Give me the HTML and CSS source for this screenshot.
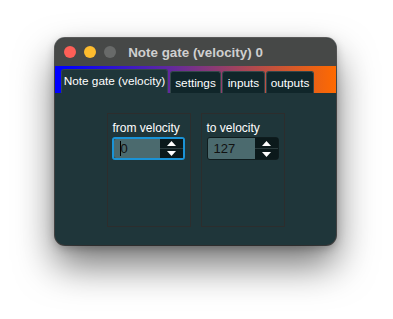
FILE: index.html
```html
<!DOCTYPE html>
<html>
<head>
<meta charset="utf-8">
<link rel="stylesheet" href="styles.css">
</head>
<body>
<div class="window">
  <div class="titlebar">
    <div class="lights">
      <span class="light red"></span>
      <span class="light yellow"></span>
      <span class="light gray"></span>
    </div>
    <div class="title">Note gate (velocity) 0</div>
    <div></div>
  </div>
  <div class="tabbar">
    <div class="tab active t-main">Note gate (velocity)</div>
    <div class="tab t-settings">settings</div>
    <div class="tab t-inputs">inputs</div>
    <div class="tab t-outputs">outputs</div>
  </div>
  <div class="content">
    <div class="group">
      <div class="label">from velocity</div>
      <div class="spin focused">
        <div class="field"><span class="caret"></span>0</div>
        <div class="buttons">
          <div class="btn"><svg width="9" height="5" viewBox="0 0 9 5"><path d="M0 5 L4.5 0 L9 5 Z" fill="#fff"/></svg></div>
          <div class="btn"><svg width="9" height="5" viewBox="0 0 9 5"><path d="M0 0 L4.5 5 L9 0 Z" fill="#fff"/></svg></div>
        </div>
      </div>
    </div>
    <div class="group">
      <div class="label">to velocity</div>
      <div class="spin">
        <div class="field">127</div>
        <div class="buttons">
          <div class="btn"><svg width="9" height="5" viewBox="0 0 9 5"><path d="M0 5 L4.5 0 L9 5 Z" fill="#fff"/></svg></div>
          <div class="btn"><svg width="9" height="5" viewBox="0 0 9 5"><path d="M0 0 L4.5 5 L9 0 Z" fill="#fff"/></svg></div>
        </div>
      </div>
    </div>
  </div>
</div>
</body>
</html>
```
FILE: styles.css
```css
html, body {
  margin: 0;
  background: #ffffff;
}
body {
  min-height: 319px;
  box-sizing: border-box;
  padding: 38px 0 0 55px;
  font-family: "Liberation Sans", Arial, sans-serif;
}
.window {
  width: 281px;
  height: 207px;
  border-radius: 10px;
  overflow: hidden;
  display: flex;
  flex-direction: column;
  background: #1f363a;
  box-shadow: 0 0 0 1px rgba(0,0,0,0.6), 0 20px 38px rgba(0,0,0,0.55), 0 3px 10px rgba(0,0,0,0.25);
}
.titlebar {
  height: 28px;
  flex: none;
  background: #464847;
  display: grid;
  grid-template-columns: 1fr auto 1fr;
  align-items: center;
}
.lights {
  display: flex;
  gap: 8px;
  padding-left: 9px;
}
.light {
  width: 12px;
  height: 12px;
  border-radius: 50%;
}
.red { background: #fe5f57; }
.yellow { background: #febc2e; }
.gray { background: #686a69; }
.title {
  color: #cfcfcf;
  font-weight: bold;
  font-size: 13.4px;
  white-space: nowrap;
}
.tabbar {
  height: 27px;
  flex: none;
  display: flex;
  align-items: flex-end;
  gap: 1px;
  padding-left: 6px;
  background: linear-gradient(to right, #0000ff 0%, #0000ff 4%, #ff6a00 100%);
}
.tab {
  height: 22px;
  box-sizing: border-box;
  padding: 0;
  display: flex;
  align-items: center;
  justify-content: center;
  font-size: 11.8px;
  color: #ffffff;
  background: #10262a;
  border: 1px solid #33474a;
  border-bottom: none;
  border-radius: 3px 3px 0 0;
  white-space: nowrap;
}
.t-main { width: 107px; margin-right: 1px; }
.t-settings { width: 51px; }
.t-inputs { width: 43px; }
.t-outputs { width: 48px; }
.tab.active {
  background: #1f363a;
  height: 24px;
  padding-bottom: 2px;
}
.content {
  flex: 1;
  display: flex;
  justify-content: center;
  gap: 10px;
  padding-top: 20px;
}
.group {
  width: 84px;
  height: 114px;
  box-sizing: border-box;
  border: 1px solid #2c2d2d;
  padding: 7px 0 0 5px;
}
.label {
  color: #ffffff;
  font-size: 12px;
  line-height: 14px;
  height: 16px;
}
.spin {
  width: 72px;
  height: 23px;
  display: flex;
  border-radius: 3px;
  box-sizing: border-box;
  border: 1px solid #0f1c1e;
}
.spin.focused {
  border: 2px solid #1a93d6;
  width: 73px;
  margin-left: -1px;
}
.field {
  flex: 1;
  background: #4b6a6e;
  border-radius: 2px 0 0 2px;
  color: #111;
  font-size: 13px;
  display: flex;
  align-items: center;
  padding-left: 6px;
}
.caret {
  width: 1px;
  height: 15px;
  background: #000;
}
.buttons {
  width: 23px;
  display: flex;
  flex-direction: column;
  gap: 1px;
  background: #2b3b3d;
}
.btn {
  flex: 1;
  background: #0b191b;
  display: flex;
  align-items: center;
  justify-content: center;
}
```
